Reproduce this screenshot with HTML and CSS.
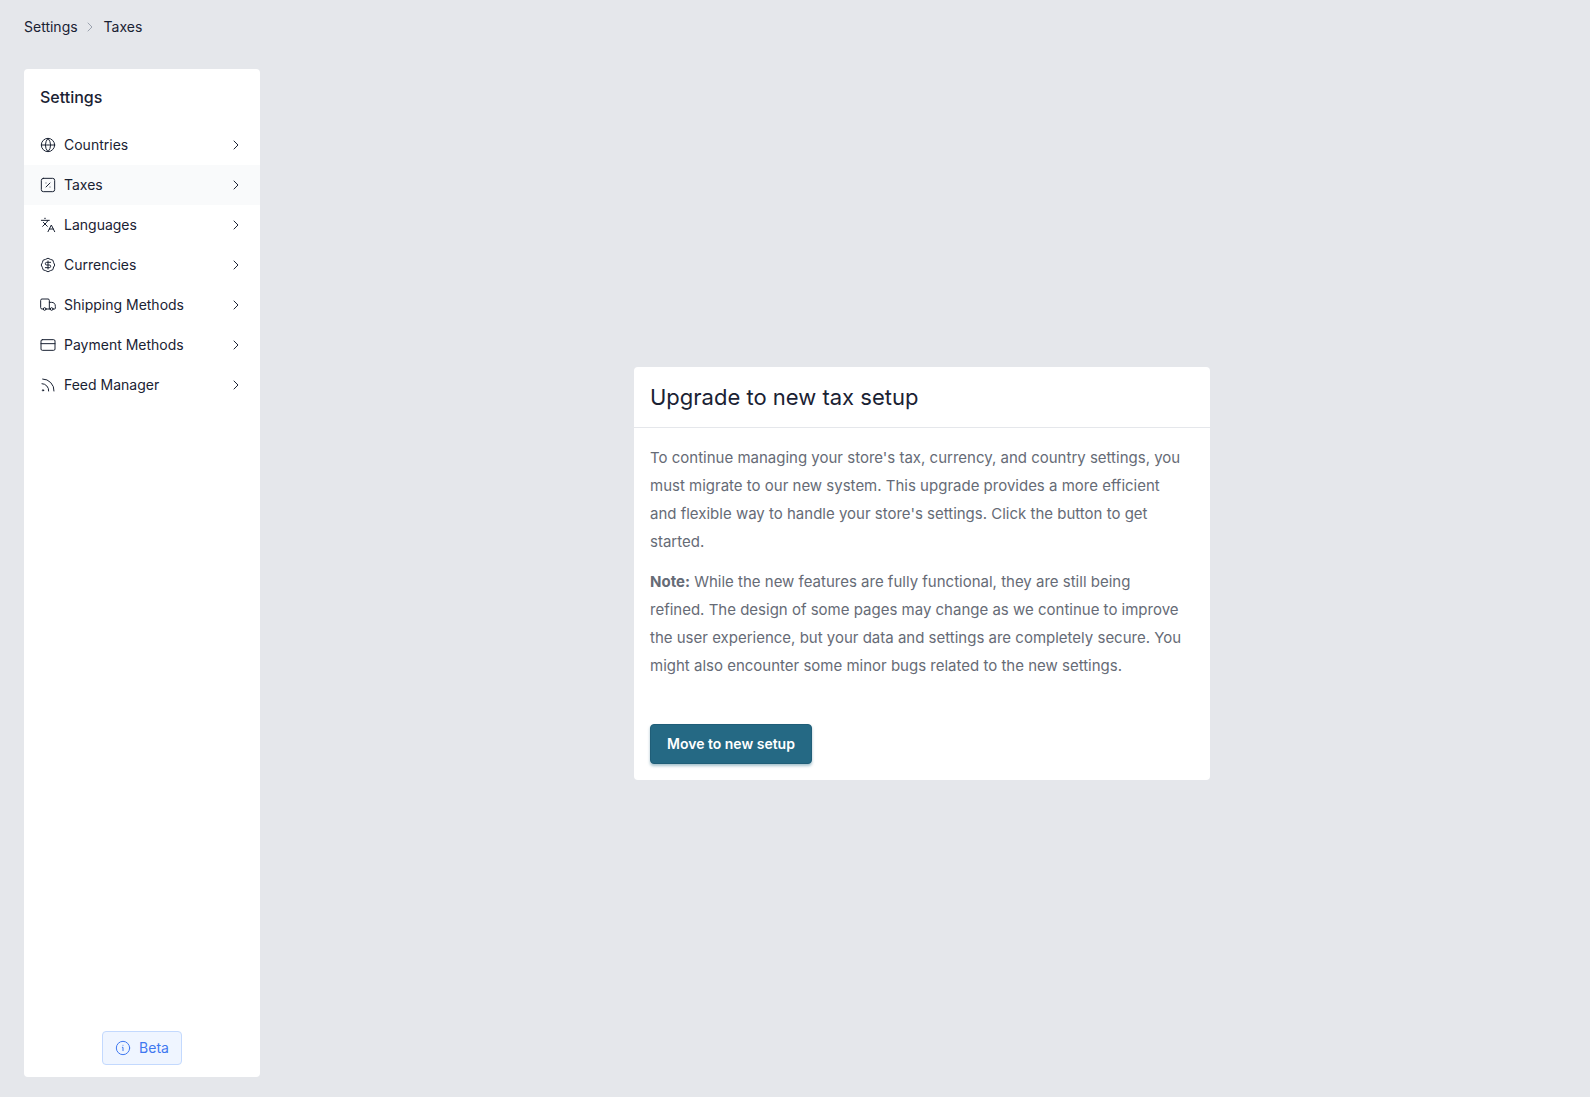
FILE: index.html
```html
<!DOCTYPE html>
<html lang="en">
<head>
    <meta charset="UTF-8">
    <meta name="viewport" content="width=device-width, initial-scale=1.0">
    <title>Settings - Taxes</title>
    <link rel="stylesheet" href="styles.css">
</head>
<body>
    <nav class="breadcrumb" aria-label="Breadcrumb">
        <a href="#settings">Settings</a>
        <svg class="icon" viewBox="0 0 24 24"><path d="m9 18 6-6-6-6"/></svg>
        <a href="#taxes">Taxes</a>
    </nav>

    <div class="layout">
        <aside class="sidebar">
            <h2>Settings</h2>
            <nav class="menu">
                <a class="menu-item" href="#countries">
                    <svg class="icon" viewBox="0 0 24 24"><circle cx="12" cy="12" r="10"/><path d="M12 2a14.5 14.5 0 0 0 0 20 14.5 14.5 0 0 0 0-20"/><path d="M2 12h20"/></svg>
                    <span>Countries</span>
                    <svg class="icon arrow" viewBox="0 0 24 24"><path d="m9 18 6-6-6-6"/></svg>
                </a>
                <a class="menu-item active" href="#taxes">
                    <svg class="icon" viewBox="0 0 24 24"><rect x="2" y="2" width="20" height="20" rx="3"/><path d="m15 9-6 6"/><path d="M9 9h.01"/><path d="M15 15h.01"/></svg>
                    <span>Taxes</span>
                    <svg class="icon arrow" viewBox="0 0 24 24"><path d="m9 18 6-6-6-6"/></svg>
                </a>
                <a class="menu-item" href="#languages">
                    <svg class="icon" viewBox="0 0 24 24"><path d="m5 8 6 6"/><path d="m4 14 6-6 2-3"/><path d="M2 5h12"/><path d="M7 2h1"/><path d="m22 22-5-10-5 10"/><path d="M14 18h6"/></svg>
                    <span>Languages</span>
                    <svg class="icon arrow" viewBox="0 0 24 24"><path d="m9 18 6-6-6-6"/></svg>
                </a>
                <a class="menu-item" href="#currencies">
                    <svg class="icon" viewBox="0 0 24 24"><path d="M20.5 15.5A5 5 0 0 1 15.5 20.5 5 5 0 0 1 8.5 20.5 5 5 0 0 1 3.5 15.5 5 5 0 0 1 3.5 8.5 5 5 0 0 1 8.5 3.5 5 5 0 0 1 15.5 3.5 5 5 0 0 1 20.5 8.5 5 5 0 0 1 20.5 15.5Z"/><path d="M16 8h-6a2 2 0 1 0 0 4h4a2 2 0 1 1 0 4H8"/><path d="M12 18V6"/></svg>
                    <span>Currencies</span>
                    <svg class="icon arrow" viewBox="0 0 24 24"><path d="m9 18 6-6-6-6"/></svg>
                </a>
                <a class="menu-item" href="#shipping">
                    <svg class="icon" viewBox="0 0 24 24"><path d="M5 18H3a2 2 0 0 1-2-2V5a2 2 0 0 1 2-2h9a2 2 0 0 1 2 2v13"/><path d="M14 8h3a6 6 0 0 1 6 6v3a1 1 0 0 1-1 1h-2"/><path d="M15 18H9"/><circle cx="7" cy="18" r="2"/><circle cx="17.5" cy="18" r="2"/></svg>
                    <span>Shipping Methods</span>
                    <svg class="icon arrow" viewBox="0 0 24 24"><path d="m9 18 6-6-6-6"/></svg>
                </a>
                <a class="menu-item" href="#payment">
                    <svg class="icon" viewBox="0 0 24 24"><rect x="1.5" y="4" width="21" height="16" rx="2"/><path d="M1.5 10h21"/></svg>
                    <span>Payment Methods</span>
                    <svg class="icon arrow" viewBox="0 0 24 24"><path d="m9 18 6-6-6-6"/></svg>
                </a>
                <a class="menu-item" href="#feed">
                    <svg class="icon" viewBox="0 0 24 24"><path d="M3 10a10 10 0 0 1 10 11"/><path d="M4 3a17 17 0 0 1 17 18"/><circle cx="4.5" cy="20" r="1"/></svg>
                    <span>Feed Manager</span>
                    <svg class="icon arrow" viewBox="0 0 24 24"><path d="m9 18 6-6-6-6"/></svg>
                </a>
            </nav>
            <button class="beta" type="button">
                <svg class="icon" viewBox="0 0 24 24"><circle cx="12" cy="12" r="10"/><path d="M12 16v-5h-1"/><path d="M12 8h.01"/></svg>
                Beta
            </button>
        </aside>

        <main class="content">
            <section class="card">
                <h1>Upgrade to new tax setup</h1>
                <div class="card-body">
                    <p>
                        To continue managing your store's tax, currency, and country settings, you<br>
                        must migrate to our new system. This upgrade provides a more efficient<br>
                        and flexible way to handle your store's settings. Click the button to get<br>
                        started.
                    </p>
                    <p>
                        <strong>Note:</strong> While the new features are fully functional, they are still being<br>
                        refined. The design of some pages may change as we continue to improve<br>
                        the user experience, but your data and settings are completely secure. You<br>
                        might also encounter some minor bugs related to the new settings.
                    </p>
                    <button class="btn-primary" type="button">Move to new setup</button>
                </div>
            </section>
        </main>
    </div>
</body>
</html>
```

FILE: styles.css
```css
* {
    box-sizing: border-box;
}
body {
    display: flex;
    flex-direction: column;
    min-height: 100vh;
    margin: 0;
    padding: 17px 24px 20px;
    background: #e5e7eb;
    color: #1a2233;
    font-family: Inter, "Liberation Sans", sans-serif;
    font-size: 14px;
    line-height: 20px;
}
h1, h2, p {
    margin: 0;
}
a {
    color: inherit;
    text-decoration: none;
}
.icon {
    width: 16px;
    height: 16px;
    flex-shrink: 0;
    fill: none;
    stroke: currentColor;
    stroke-width: 1.5;
    stroke-linecap: round;
    stroke-linejoin: round;
}

.breadcrumb {
    display: flex;
    align-items: center;
    margin-bottom: 32px;
}
.breadcrumb .icon {
    margin: 0 6px 0 4px;
    color: #9ca3af;
}

.layout {
    display: flex;
    flex: 1;
    gap: 18px;
}
.sidebar {
    display: flex;
    flex-direction: column;
    width: 236px;
    padding: 16px 0 12px;
    background: #fff;
    border-radius: 4px;
}
.sidebar h2 {
    padding: 0 16px;
    margin-bottom: 16px;
    font-size: 16px;
    font-weight: 500;
    line-height: 24px;
}
.menu-item {
    display: flex;
    align-items: center;
    gap: 8px;
    height: 40px;
    padding: 0 16px;
}
.menu-item.active {
    background: #f9fafb;
}
.menu-item .arrow {
    margin-left: auto;
}
.beta {
    display: flex;
    align-items: center;
    align-self: center;
    gap: 8px;
    margin-top: auto;
    padding: 6px 12px;
    background: #eff5ff;
    border: 1px solid #c3d9fe;
    border-radius: 4px;
    color: #3f78f0;
    font: inherit;
    cursor: pointer;
}

.content {
    display: flex;
    flex: 1;
    align-items: center;
    justify-content: center;
}
.card {
    width: 100%;
    max-width: 576px;
    background: #fff;
    border-radius: 4px;
}
.card h1 {
    padding: 14px 16px;
    border-bottom: 1px solid #e5e7eb;
    font-size: 22px;
    font-weight: 400;
    line-height: 32px;
}
.card-body {
    padding: 16px;
}
.card p {
    margin-bottom: 12px;
    color: #666b76;
    font-size: 15px;
    line-height: 28px;
}
.btn-primary {
    height: 40px;
    margin-top: 32px;
    padding: 0 16px;
    background: #256984;
    border: 1px solid #205e78;
    border-radius: 4px;
    box-shadow: 0 2px 3px rgba(37, 105, 132, 0.4);
    color: #fff;
    font: inherit;
    font-weight: 600;
    cursor: pointer;
}
```
